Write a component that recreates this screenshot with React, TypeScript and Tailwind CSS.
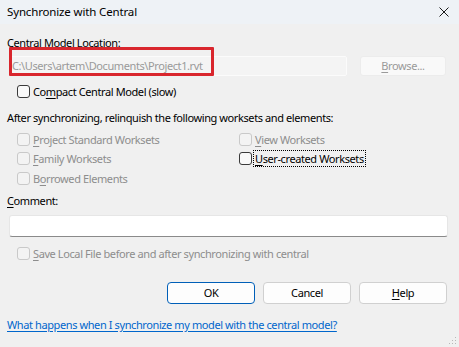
import React from "react";

const font = { fontFamily: '"Noto Sans", "Open Sans", sans-serif' };

interface CheckProps {
	label: React.ReactNode;
	disabled?: boolean;
	focused?: boolean;
}

const Check: React.FC<CheckProps> = ({ label, disabled, focused }) => {
	return (
		<div className="flex items-center h-[19.5px]">
			<span
				className={`w-[13px] h-[13px] rounded-[3px] border shrink-0 ${
					disabled ? "border-[#c9c9c9] bg-[#f3f3f3]" : "border-[#3a3a3a] bg-[#f9f9f9]"
				}`}
			/>
			<span
				className={`ml-[1px] leading-[15px] px-[1px] ${
					disabled ? "text-[#8d8d8d]" : "text-black"
				} ${focused ? "border border-dotted border-black" : "border border-transparent"}`}
			>
				{label}
			</span>
		</div>
	);
};

const Ul: React.FC<{ children: React.ReactNode }> = ({ children }) => (
	<span className="underline underline-offset-2">{children}</span>
);

export default function App() {
	return (
		<div
			className="relative w-[459px] h-[347px] bg-[#f0f0f0] overflow-hidden text-[11px] tracking-[-0.4px] text-black"
			style={font}
		>
			{/* title bar */}
			<div className="h-[24px] bg-[#eef2f6] flex items-center justify-between pl-[7px] pr-[10px]">
				<span className="leading-[16px] text-[11.5px] tracking-[-0.15px]">Synchronize with Central</span>
				<svg width="10" height="10" viewBox="0 0 10 10">
					<path d="M0.5 0.5 L9.5 9.5 M9.5 0.5 L0.5 9.5" stroke="#1a1a1a" strokeWidth="1" />
				</svg>
			</div>

			<div className="px-[7px]">
				<div className="mt-[11px] leading-[16px]">Central Model Location:</div>

				<div className="mt-[5px] flex items-center">
					<div className="ml-[2px] w-[338px] h-[20px] bg-[#f4f4f4] border border-[#fbfbfb] rounded-[2px] flex items-center pl-[2px] text-[#9a9a9a]">
						C:\Users\artem\Documents\Project1.rvt
					</div>
					<div className="ml-[13px] w-[86px] h-[20px] bg-[#f9f9f9] border border-[#ececec] rounded-[3px] flex items-center justify-center text-[#9a9a9a]">
						<Ul>B</Ul>rowse...
					</div>
				</div>

				<div className="mt-[6px] pl-[10px]">
					<Check
						label={
							<>
								Co<Ul>m</Ul>pact Central Model (slow)
							</>
						}
					/>
				</div>

				<div className="mt-[8px] leading-[16px]">
					After synchronizing, relinquish the following worksets and elements:
				</div>

				<div className="mt-[4px] pl-[10px] grid grid-cols-[222px_1fr]">
					<Check
						disabled
						label={
							<>
								<Ul>P</Ul>roject Standard Worksets
							</>
						}
					/>
					<Check
						disabled
						label={
							<>
								<Ul>V</Ul>iew Worksets
							</>
						}
					/>
					<Check
						disabled
						label={
							<>
								<Ul>F</Ul>amily Worksets
							</>
						}
					/>
					<Check
						focused
						label={
							<>
								<Ul>U</Ul>ser-created Worksets
							</>
						}
					/>
					<Check
						disabled
						label={
							<>
								B<Ul>o</Ul>rrowed Elements
							</>
						}
					/>
				</div>

				<div className="mt-[5px] leading-[16px]">
					<Ul>C</Ul>omment:
				</div>

				<div className="mt-[6px] ml-[2px] w-[439px] h-[22px] bg-white border border-[#e6e6e6] border-b-[#8a8a8a] rounded-[3px]" />

				<div className="mt-[7px] pl-[10px]">
					<Check
						disabled
						label={
							<>
								<Ul>S</Ul>ave Local File before and after synchronizing with central
							</>
						}
					/>
				</div>

				<div className="mt-[18px] flex justify-end gap-[8px] pr-[5px]">
					<button className="w-[88px] h-[22px] bg-[#fdfdfd] border border-[#005fb8] rounded-[4px] leading-none">
						OK
					</button>
					<button className="w-[88px] h-[22px] bg-[#fdfdfd] border border-[#d0d0d0] rounded-[4px] leading-none">
						Cancel
					</button>
					<button className="w-[88px] h-[22px] bg-[#fdfdfd] border border-[#d0d0d0] rounded-[4px] leading-none">
						<Ul>H</Ul>elp
					</button>
				</div>

				<div className="mt-[13px] leading-[16px]">
					<a className="text-[#0066cc] underline underline-offset-2" href="#">
						What happens when I synchronize my model with the central model?
					</a>
				</div>
			</div>

			{/* annotation box */}
			<div className="absolute left-[9px] top-[47px] w-[205px] h-[29px] border-[3px] border-[#d9262d] rounded-[1px]" />

			{/* resize grip */}
			<svg className="absolute right-[2px] bottom-[2px]" width="8" height="8" viewBox="0 0 8 8">
				<rect x="6" y="0" width="1" height="1" fill="#b8b8b8" />
				<rect x="3" y="3" width="1" height="1" fill="#b8b8b8" />
				<rect x="6" y="3" width="1" height="1" fill="#b8b8b8" />
				<rect x="0" y="6" width="1" height="1" fill="#b8b8b8" />
				<rect x="3" y="6" width="1" height="1" fill="#b8b8b8" />
				<rect x="6" y="6" width="1" height="1" fill="#b8b8b8" />
			</svg>
		</div>
	);
}
